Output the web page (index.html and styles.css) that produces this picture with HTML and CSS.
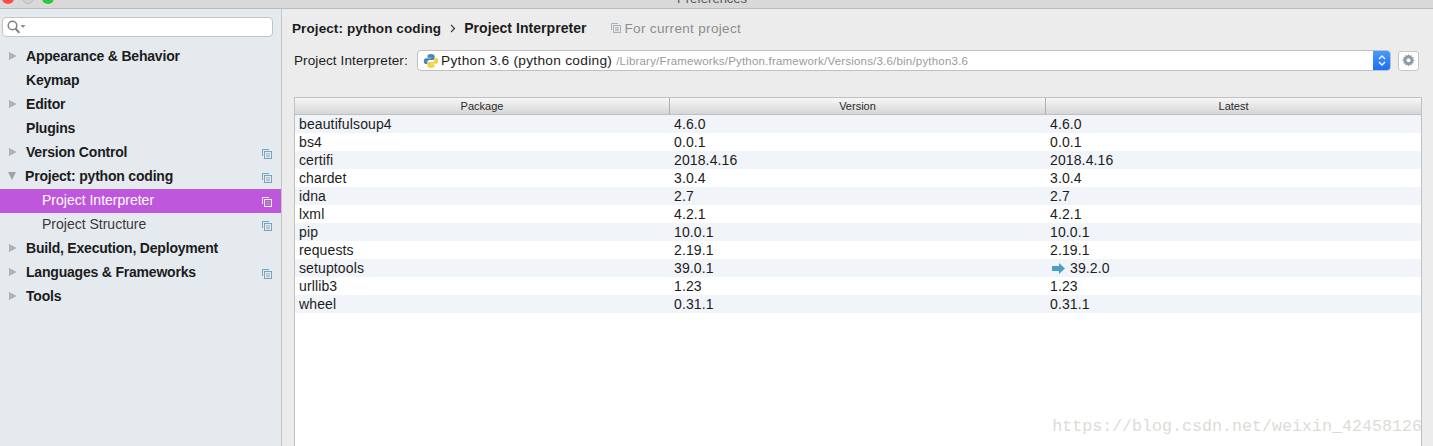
FILE: index.html
```html
<!DOCTYPE html>
<html lang="en">
<head>
<meta charset="utf-8">
<title>Preferences</title>
<link rel="stylesheet" href="styles.css">
</head>
<body>
<svg width="0" height="0" class="defs">
  <symbol id="copy" viewBox="0 0 10 10">
    <path d="M.5 7V.5H7" fill="none" stroke="currentColor"/>
    <rect x="2.500" y="2.500" width="7" height="7" fill="none" stroke="currentColor"/>
    <path d="M4 4.700h4M4 6.200h4M4 7.700h4" stroke="#a3a9ad" stroke-width=".8"/>
  </symbol>
</svg>
<div class="titlebar">
  <span class="light red"></span><span class="light grey"></span><span class="light green"></span>
  <span class="wintitle">Preferences</span>
</div>
<div class="window">
  <aside class="sidebar">
    <div class="search">
      <svg class="search-icon" width="19" height="14" viewBox="0 0 19 14"><circle cx="5.500" cy="5.500" r="4.300" fill="none" stroke="#808080" stroke-width="1.500"/><path d="M8.500 8.500l3.800 4.300" stroke="#808080" stroke-width="2"/><path d="M13.500 5h5l-2.500 3z" fill="#8a8a8a"/></svg>
    </div>
    <nav class="tree">
      <div class="node bold"><i class="tri right"></i>Appearance &amp; Behavior</div>
      <div class="node bold"><i class="tri"></i>Keymap</div>
      <div class="node bold"><i class="tri right"></i>Editor</div>
      <div class="node bold"><i class="tri"></i>Plugins</div>
      <div class="node bold"><i class="tri right"></i>Version Control<svg class="copy"><use href="#copy"/></svg></div>
      <div class="node bold"><i class="tri down"></i>Project: python coding<svg class="copy"><use href="#copy"/></svg></div>
      <div class="node child active">Project Interpreter<svg class="copy"><use href="#copy"/></svg></div>
      <div class="node child">Project Structure<svg class="copy"><use href="#copy"/></svg></div>
      <div class="node bold"><i class="tri right"></i>Build, Execution, Deployment</div>
      <div class="node bold"><i class="tri right"></i>Languages &amp; Frameworks<svg class="copy"><use href="#copy"/></svg></div>
      <div class="node bold"><i class="tri right"></i>Tools</div>
    </nav>
  </aside>
  <main class="content">
    <div class="crumbs">
      <b class="crumb-a">Project: python coding</b>
      <svg class="chev" width="6" height="9" viewBox="0 0 6 9"><path d="M1 .8l3.500 3.700L1 8.200" fill="none" stroke="#333" stroke-width="1.200"/></svg>
      <b class="crumb-b">Project Interpreter</b>
      <span class="scope"><svg width="10" height="10" class="scope-icon"><use href="#copy"/></svg>For current project</span>
    </div>
    <div class="interp-row">
      <label class="interp-label">Project Interpreter:</label>
      <div class="combo">
        <svg class="py" width="16" height="16" viewBox="0 0 16 16">
          <path d="M8 1C5 1 4.500 2 4.500 3.200V4.700H8.200V5.300H3C1.600 5.300.8 6.500.8 8.200s.8 2.900 2.200 2.900H4.400V9.300c0-1.300 1-2.200 2.300-2.200h3c1.100 0 1.900-.8 1.900-1.900V3.200C11.600 1.900 10.400 1 8 1z" fill="#4a86b8"/>
          <path d="M8 15c3 0 3.500-1 3.500-2.200v-1.500H7.800v-.6H13c1.400 0 2.200-1.200 2.200-2.900s-.8-2.900-2.200-2.900h-1.400v1.800c0 1.300-1 2.200-2.300 2.200h-3c-1.100 0-1.900.8-1.900 1.900v2c0 1.300 1.200 2.200 3.600 2.200z" fill="#f7cf47"/>
        </svg>
        <span class="py-name">Python 3.6 (python coding)</span>
        <span class="py-path">/Library/Frameworks/Python.framework/Versions/3.6/bin/python3.6</span>
        <span class="stepper"><svg width="8" height="13" viewBox="0 0 8 13"><path d="M1 5l3-3 3 3M1 8l3 3 3-3" fill="none" stroke="#fff" stroke-width="1.300"/></svg></span>
      </div>
      <button class="gear" type="button" aria-label="Settings">
        <svg width="13" height="13" viewBox="0 0 13 13"><path d="M6.500 0l1 1.800 1.900-.7.300 2 2 .3-.7 1.900 1.800 1-1.800 1 .7 1.900-2 .3-.3 2-1.900-.7-1 1.800-1-1.800-1.900.7-.3-2-2-.3.7-1.900L0 6.300l1.800-1-.7-1.900 2-.3.3-2 1.900.7z" fill="#8f9aa3"/><circle cx="6.500" cy="6.300" r="2" fill="#fff"/></svg>
      </button>
    </div>
    <div class="table">
      <div class="thead"><span>Package</span><span>Version</span><span>Latest</span></div>
      <div class="row"><span>beautifulsoup4</span><span>4.6.0</span><span>4.6.0</span></div>
      <div class="row"><span>bs4</span><span>0.0.1</span><span>0.0.1</span></div>
      <div class="row"><span>certifi</span><span>2018.4.16</span><span>2018.4.16</span></div>
      <div class="row"><span>chardet</span><span>3.0.4</span><span>3.0.4</span></div>
      <div class="row"><span>idna</span><span>2.7</span><span>2.7</span></div>
      <div class="row"><span>lxml</span><span>4.2.1</span><span>4.2.1</span></div>
      <div class="row"><span>pip</span><span>10.0.1</span><span>10.0.1</span></div>
      <div class="row"><span>requests</span><span>2.19.1</span><span>2.19.1</span></div>
      <div class="row"><span>setuptools</span><span>39.0.1</span><span class="upgrade"><svg width="13" height="11" viewBox="0 0 13 11"><path d="M0 3h7V0l6 5.500-6 5.500V8H0z" fill="#4f9cc6"/></svg>39.2.0</span></div>
      <div class="row"><span>urllib3</span><span>1.23</span><span>1.23</span></div>
      <div class="row"><span>wheel</span><span>0.31.1</span><span>0.31.1</span></div>
      <div class="watermark">https://blog.csdn.net/weixin_42458126</div>
    </div>
  </main>
</div>
</body>
</html>
```
FILE: styles.css
```css
* { box-sizing: border-box; }
html, body { margin: 0; height: 100%; overflow: hidden; }
body {
  width: 1433px;
  height: 446px;
  font-family: "Liberation Sans", Arial, sans-serif;
  font-size: 14px;
  color: #1c1c1c;
  background: #ececec;
  display: flex;
  flex-direction: column;
}
.defs { position: absolute; }
.titlebar {
  height: 9px;
  flex: none;
  background: #d9d9d9;
  border-bottom: 1px solid #bcbcbc;
  position: relative;
  overflow: hidden;
}
.light {
  position: absolute;
  top: -8px;
  width: 12px;
  height: 12px;
  border-radius: 50%;
}
.red { left: 2px; background: #fc4d4a; }
.grey { left: 22px; background: #d0d0d0; border: 1px solid #bbb; }
.green { left: 42px; background: #2ac73f; }
.wintitle {
  position: absolute;
  left: 677px;
  top: -9px;
  font-size: 13px;
  line-height: 15px;
  color: #555;
}
.window { flex: 1; display: flex; min-height: 0; }
.sidebar {
  width: 282px;
  flex: none;
  background: #e5eaef;
  border-right: 1px solid #c6c6c6;
}
.search {
  height: 20px;
  margin: 8px 8px 0 2px;
  background: #fff;
  border: 1px solid #c4c4c4;
  border-radius: 4px;
  display: flex;
  align-items: center;
  padding-left: 4px;
}
.tree { margin-top: 8px; display: flex; flex-direction: column; }
.node {
  height: 24px;
  padding-bottom: 2px;
  display: flex;
  align-items: center;
  position: relative;
  white-space: nowrap;
}
.bold { font-weight: 700; padding-left: 9px; letter-spacing: -.2px; }
.tri { width: 17px; flex: none; height: 9px; }
.tri.right { width: 0; height: 0; margin-right: 9px; border-left: 8px solid #aeb3b7; border-top: 4.500px solid transparent; border-bottom: 4.500px solid transparent; }
.tri.down { width: 0; height: 0; margin-right: 9px; margin-left: -1px; border-top: 8px solid #9fa4a8; border-left: 4.500px solid transparent; border-right: 4.500px solid transparent; }
.child { padding-left: 42px; color: #3a3a3a; }
.active { background: #bf57dc; color: #fff; }
.copy { position: absolute; left: 262px; top: 8px; width: 10px; height: 10px; color: #6ea6c4; }
.active .copy { color: #eef0f4; }
.content { flex: 1; min-width: 0; display: flex; flex-direction: column; padding: 0 10px; }
.crumbs {
  height: 20px;
  margin-top: 9px;
  display: flex;
  align-items: center;
}
.crumb-a { font-size: 13.500px; letter-spacing: .1px; }
.crumb-b { font-size: 14px; letter-spacing: .05px; }
.chev { margin: 0 8px 0 9px; }
.scope { margin-left: 24px; color: #8d8d8d; display: flex; align-items: center; gap: 4px; font-size: 13.500px; letter-spacing: .33px; }
.scope-icon { color: #a9b0b5; }
.interp-row {
  display: flex;
  align-items: center;
  height: 21px;
  margin-top: 12px;
  padding-left: 2px;
}
.interp-label { width: 123px; flex: none; font-size: 13.500px; letter-spacing: .1px; }
.combo {
  width: 974px;
  height: 21px;
  background: #fff;
  border: 1px solid #c0c0c0;
  border-radius: 4px;
  display: flex;
  align-items: center;
  padding-left: 5px;
  position: relative;
  overflow: hidden;
}
.py { margin-right: 2px; flex: none; }
.py-name { font-size: 13.700px; letter-spacing: .29px; white-space: nowrap; }
.py-path { margin-left: 4px; font-size: 11.500px; color: #9a9a9a; white-space: nowrap; letter-spacing: .2px; }
.stepper {
  position: absolute;
  right: -1px;
  top: -1px;
  bottom: -1px;
  width: 18px;
  background: linear-gradient(#4a9cfb, #1a6ef5);
  display: flex;
  align-items: center;
  justify-content: center;
}
.gear {
  width: 21px;
  height: 20px;
  margin-left: 7px;
  padding: 0;
  background: #fff;
  border: 1px solid #c6c6c6;
  border-radius: 3px;
  display: flex;
  align-items: center;
  justify-content: center;
}
.table {
  flex: 1;
  margin: 26px 0 0 2px;
  width: 1128px;
  background: #fff;
  border-left: 1px solid #c0c0c0;
  border-right: 1px solid #c0c0c0;
  position: relative;
  min-height: 0;
}
.thead, .row { display: grid; grid-template-columns: 374px 376px 1fr; }
.thead {
  height: 18px;
  margin: 0 -1px;
  border: 1px solid #c0c0c0;
  background: linear-gradient(#f7f7f7, #d6d6d6);
  font-size: 11px;
  line-height: 16px;
  text-align: center;
  color: #2a2a2a;
}
.thead span + span { border-left: 1px solid #b0b0b0; }
.row { height: 18px; line-height: 18px; letter-spacing: .12px; }
.row:nth-child(even) { background: #f1f4f9; }
.row span { padding-left: 4px; }
.row span + span { padding-left: 5px; }
.row .upgrade { padding-left: 7px; display: flex; align-items: center; gap: 5px; }
.watermark {
  position: absolute;
  right: -1px;
  bottom: 8px;
  font-family: "Liberation Mono", monospace;
  font-size: 16.670px;
  line-height: 22px;
  color: #dcdcd6;
  white-space: nowrap;
}
```
